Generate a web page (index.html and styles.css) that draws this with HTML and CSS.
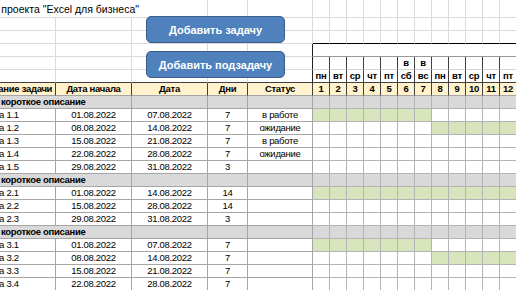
FILE: index.html
```html
<!DOCTYPE html>
<html lang="ru">
<head>
    <meta charset="UTF-8">
    <meta name="viewport" content="width=device-width, initial-scale=1.0">
    <title>План проекта</title>
    <link rel="stylesheet" href="styles.css">
</head>
<body>
    <div class="sheet" id="sheet"></div>

    <div class="btn btn-task">Добавить задачу</div>
    <div class="btn btn-sub">Добавить подзадачу</div>

    <script>
        const sheet = document.getElementById('sheet');
        const DAYS = 12;
        const weekdays = ['пн', 'вт', 'ср', 'чт', 'пт', 'сб', 'вс', 'пн', 'вт', 'ср', 'чт', 'пт'];

        // Task list: [name, start, end, days, status, first bar day, last bar day]
        const rows = [
            ['group', 'Этап 1 короткое описание'],
            ['Задача 1.1', '01.08.2022', '07.08.2022', 7, 'в работе', 1, 7],
            ['Задача 1.2', '08.08.2022', '14.08.2022', 7, 'ожидание', 8, 14],
            ['Задача 1.3', '15.08.2022', '21.08.2022', 7, 'в работе', 15, 21],
            ['Задача 1.4', '22.08.2022', '28.08.2022', 7, 'ожидание', 22, 28],
            ['Задача 1.5', '29.08.2022', '31.08.2022', 3, '', 29, 31],
            ['group', 'Этап 2 короткое описание'],
            ['Задача 2.1', '01.08.2022', '14.08.2022', 14, '', 1, 14],
            ['Задача 2.2', '15.08.2022', '28.08.2022', 14, '', 15, 28],
            ['Задача 2.3', '29.08.2022', '31.08.2022', 3, '', 29, 31],
            ['group', 'Этап 3 короткое описание'],
            ['Задача 3.1', '01.08.2022', '07.08.2022', 7, '', 1, 7],
            ['Задача 3.2', '08.08.2022', '14.08.2022', 7, '', 8, 14],
            ['Задача 3.3', '15.08.2022', '21.08.2022', 7, '', 15, 21],
            ['Задача 3.4', '22.08.2022', '28.08.2022', 7, '', 22, 28]
        ];

        function cell(cls, text) {
            const el = document.createElement('div');
            el.className = 'c ' + (cls || '');
            if (text !== undefined && text !== '') el.textContent = text;
            sheet.appendChild(el);
            return el;
        }

        // Row 1: title
        const title = cell('title span3');
        const titleText = document.createElement('div');
        titleText.className = 'title-text';
        titleText.textContent = 'План проекта "Excel для бизнеса"';
        title.appendChild(titleText);
        cell();
        cell();
        for (let d = 1; d <= DAYS; d++) cell();

        // Rows 2-6: empty sheet on the left, gantt header on the right
        for (let r = 2; r <= 6; r++) {
            for (let c = 1; c <= 5; c++) {
                let cls = '';
                if (r === 6) cls += ' above-head';
                if (r >= 4 && c === 5) cls += ' dk-right';
                cell(cls);
            }
            if (r <= 3) {
                for (let d = 1; d <= DAYS; d++) cell(r === 3 ? 'above-gantt' : '');
            } else if (r === 4) {
                cell('month span12');
            } else if (r === 5) {
                for (let d = 1; d <= DAYS; d++) cell('g-head', d === 6 || d === 7 ? 'в' : '');
            } else {
                for (let d = 1; d <= DAYS; d++) cell('g-head wd', weekdays[d - 1]);
            }
        }

        // Row 7: table header
        ['Название задачи', 'Дата начала', 'Дата', 'Дни', 'Статус'].forEach(t => cell('head', t));
        for (let d = 1; d <= DAYS; d++) cell('head g-num', d);

        // Data rows
        rows.forEach(row => {
            if (row[0] === 'group') {
                cell('t grp span2 grp-name', row[1]);
                cell('t grp');
                cell('t grp');
                cell('t grp');
                for (let d = 1; d <= DAYS; d++) cell('t grp g');
                return;
            }
            const [name, start, end, days, status, from, to] = row;
            cell('t task-name', name);
            cell('t center', start);
            cell('t center', end);
            cell('t center', days);
            cell('t center', status);
            for (let d = 1; d <= DAYS; d++) {
                cell('t g' + (d >= from && d <= to ? ' bar' : ''));
            }
        });
    </script>
</body>
</html>
```

FILE: styles.css
```css
body {
    margin: 0;
    background: #fff;
    color: #000;
    font-family: "Liberation Sans", Arial, sans-serif;
    font-size: 9.5px;
    height: 290px;
    overflow: hidden;
    position: relative;
}

.sheet {
    display: grid;
    grid-template-columns: 82px 76px 76px 40px 65px repeat(12, 17px);
    grid-template-rows: 18px repeat(21, 13px);
    width: max-content;
    margin-left: -26px;
}

.c {
    box-sizing: border-box;
    border-right: 1px solid #dadada;
    border-bottom: 1px solid #dadada;
    line-height: 12px;
    padding: 0 2px;
    white-space: nowrap;
    overflow: hidden;
    letter-spacing: -0.3px;
}

.span2 { grid-column: span 2; }
.span3 { grid-column: span 3; }
.span12 { grid-column: span 12; }

.title {
    line-height: 18px;
    font-size: 10.5px;
    letter-spacing: 0;
}

.title-text {
    display: flex;
    justify-content: flex-end;
    width: 163px;
}

.above-head { border-bottom-color: #404040; }
.above-gantt { border-bottom-color: #000; }
.dk-right { border-right-color: #202020; }

.month {
    border-right: none;
    border-bottom-color: #9a9a9a;
}

.g-head {
    padding: 0;
    text-align: center;
    font-weight: bold;
    border-right-color: #404040;
    border-bottom-color: #d4d4d4;
}

.wd { border-bottom-color: #404040; }

.head {
    background: #fff2cc;
    font-weight: bold;
    text-align: center;
    border-right-color: #404040;
    border-bottom-color: #a6a6a6;
}

.g-num { padding: 0; }

.t {
    border-right-color: #a6a6a6;
    border-bottom-color: #a6a6a6;
}

.task-name { text-indent: -2px; }

.g {
    padding: 0;
    border-right-color: #b4b4b4;
    border-bottom-color: #b4b4b4;
}

.center { text-align: center; }

.grp {
    background: #d9d9d9;
    font-weight: bold;
}

.grp-name { text-indent: -6px; }

.bar { background: #d8e4bc; }

.btn {
    position: absolute;
    left: 146px;
    width: 139px;
    height: 27px;
    box-sizing: border-box;
    background: #4f81bd;
    border: 1px solid #385d8a;
    border-radius: 5px;
    color: #fff;
    font-size: 11px;
    font-weight: bold;
    display: flex;
    align-items: center;
    justify-content: center;
}

.btn-task { top: 16px; }
.btn-sub { top: 51px; }
```
